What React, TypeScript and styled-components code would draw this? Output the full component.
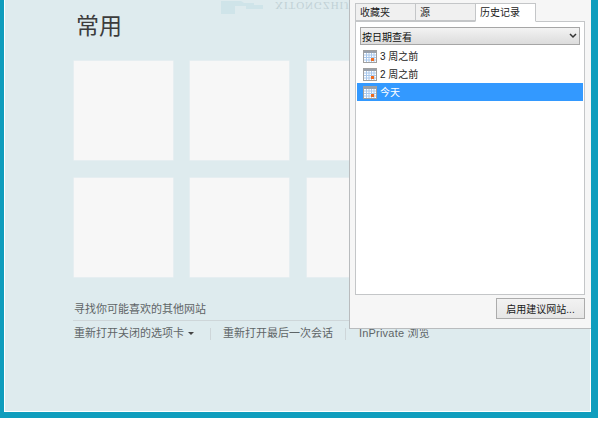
import React from 'react';
import styled, { createGlobalStyle } from 'styled-components';

const Global = createGlobalStyle`
html, body { margin: 0; padding: 0; background: #fff; }
body { font-family: "Liberation Sans", "Noto Sans CJK SC", sans-serif; }
`;

const Frame = styled.div`
box-sizing: border-box;
width: 598px;
height: 418px;
background: #deebee;
border-style: solid;
border-color: #0f9dbd;
border-width: 0 7px 6px 4px;
box-shadow: inset 1px 0 0 #fff, inset -1px 0 0 #fff, inset 0 -1px 0 #fff;
position: relative;
overflow: hidden;
`;

const Page = styled.main`
padding: 12px 0 0 70px;
`;

const Heading = styled.h1`
margin: 0 0 0 2px;
font-size: 23px;
line-height: 28px;
font-weight: 400;
color: #3c3c3c;
`;

const Tiles = styled.div`
display: grid;
grid-template-columns: repeat(3, 99px);
grid-auto-rows: 99px;
gap: 18px 17.4px;
margin-top: 21px;
`;

const Tile = styled.div`
background: #f7f7f7;
box-shadow: 0 0 0 0.5px #eef2f3;
`;

const Discover = styled.div`
margin-top: 24px;
height: 17px;
font-size: 11px;
line-height: 17px;
color: #5e6567;
`;

const Links = styled.div`
display: flex;
align-items: center;
margin: 2px 0 0 -1px;
padding: 5px 0 0 1px;
border-top: 1px solid #ced6d9;
font-size: 11px;
line-height: 15px;
color: #5e6567;
`;

const LinkItem = styled.span`
display: flex;
align-items: center;
gap: 4px;
`;

const PrivateLink = styled(LinkItem)`
margin-left: 1px;
letter-spacing: 0.2px;
`;

const Caret = styled.i`
width: 0;
height: 0;
margin-right: 4px;
border-style: solid;
border-width: 3px 3px 0;
border-color: #444 transparent transparent;
`;

const Bar = styled.span`
width: 1px;
height: 12px;
margin: 0 12px;
background: #ced6d9;
`;

const Watermark = styled.div`
position: absolute;
left: 216px;
top: 0;
display: flex;
align-items: flex-start;
gap: 8px;
opacity: 0.55;
`;

const WatermarkText = styled.span`
font-family: "Liberation Serif", serif;
font-size: 11px;
line-height: 11px;
letter-spacing: 1px;
white-space: nowrap;
color: #a9bcc3;
transform: scaleY(-1);
`;

const Panel = styled.aside`
position: absolute;
left: 345px;
top: 0;
box-sizing: border-box;
width: 242px;
height: 329px;
padding: 3px 6px 0 5px;
background: #f6f6f6;
border: solid #b9bcbe;
border-width: 0 0 1px 1px;
display: flex;
flex-direction: column;
`;

const Tabs = styled.div`
display: flex;
height: 18px;
padding-left: 1px;
position: relative;
z-index: 1;
`;

const Tab = styled.div<{ $active?: boolean }>`
box-sizing: border-box;
width: 61px;
height: ${(p) => (p.$active ? 19 : 18)}px;
padding-left: 4px;
font-size: 10px;
line-height: 18px;
color: #222;
background: ${(p) => (p.$active ? '#fff' : '#f0f0f0')};
border: 1px solid #c4c6c8;
border-bottom-color: ${(p) => (p.$active ? '#fff' : '#c4c6c8')};
margin-left: -1px;
`;

const TabBody = styled.div`
box-sizing: border-box;
width: 230px;
height: 274px;
background: #fff;
border: 1px solid #c4c6c8;
padding: 5px 1px 0 1px;
display: flex;
flex-direction: column;
`;

const Select = styled.div`
box-sizing: border-box;
height: 18px;
margin: 0 3px;
padding: 0 2px 0 1px;
display: flex;
align-items: center;
justify-content: space-between;
font-size: 10px;
color: #111;
background: linear-gradient(#f3f3f3, #dcdcdc);
border: 1px solid #a6a6a6;
`;

const Rows = styled.div`
margin-top: 2px;
display: flex;
flex-direction: column;
`;

const Row = styled.div<{ $selected?: boolean }>`
height: 18px;
padding-left: 6px;
display: flex;
align-items: center;
gap: 3px;
font-size: 10px;
color: ${(p) => (p.$selected ? '#fff' : '#1a1a1a')};
background: ${(p) => (p.$selected ? '#3399ff' : 'transparent')};
`;

const RowLabel = styled.span`
padding-bottom: 2px;
`;

const Footer = styled.div`
display: flex;
justify-content: flex-end;
width: 230px;
margin-top: 3px;
`;

const Button = styled.button`
box-sizing: border-box;
width: 89px;
height: 21px;
padding: 0;
font-family: inherit;
font-size: 10px;
color: #1a1a1a;
background: linear-gradient(#f2f2f2, #e6e6e6);
border: 1px solid #acacac;
`;

const CalendarIcon = () => (
  <svg width="14" height="13" viewBox="0 0 14 13">
    <rect x="0.5" y="0.5" width="13" height="12" fill="#fff" stroke="#a0a0a0" />
    <rect x="1" y="1" width="12" height="2" fill="#98a0ab" />
    <path d="M1 5h12M1 7.5h12M1 10h12M3.5 3v9M6 3v9M8.5 3v9M11 3v9" stroke="#a9c8ec" strokeWidth="1" />
    <rect x="8" y="8" width="3" height="3" fill="#ee6a1e" />
  </svg>
);

const Chevron = () => (
  <svg width="8" height="6" viewBox="0 0 8 6">
    <path d="M1 1l3 3 3-3" fill="none" stroke="#333" strokeWidth="1.5" />
  </svg>
);

const App: React.FC = () => (
  <>
    <Global />
    <Frame>
      <Watermark>
        <svg width="47" height="15" viewBox="0 0 47 15">
          <path d="M1 1h14v13H1zM15 1h6l3 2h10v2h9v4H26V6H15z" fill="#c4dfe6" />
        </svg>
        <WatermarkText>XITONGZHIJIA</WatermarkText>
      </Watermark>
      <Page>
        <Heading>常用</Heading>
        <Tiles>
          {Array.from({ length: 6 }).map((_, i) => (
            <Tile key={i} />
          ))}
        </Tiles>
        <Discover>寻找你可能喜欢的其他网站</Discover>
        <Links>
          <LinkItem>
            重新打开关闭的选项卡
            <Caret />
          </LinkItem>
          <Bar />
          <LinkItem>重新打开最后一次会话</LinkItem>
          <Bar />
          <PrivateLink>InPrivate 浏览</PrivateLink>
        </Links>
      </Page>
      <Panel>
        <Tabs>
          <Tab>收藏夹</Tab>
          <Tab>源</Tab>
          <Tab $active>历史记录</Tab>
        </Tabs>
        <TabBody>
          <Select>
            按日期查看
            <Chevron />
          </Select>
          <Rows>
            <Row><CalendarIcon /><RowLabel>3 周之前</RowLabel></Row>
            <Row><CalendarIcon /><RowLabel>2 周之前</RowLabel></Row>
            <Row $selected><CalendarIcon /><RowLabel>今天</RowLabel></Row>
          </Rows>
        </TabBody>
        <Footer>
          <Button>启用建议网站...</Button>
        </Footer>
      </Panel>
    </Frame>
  </>
);

export default App;
